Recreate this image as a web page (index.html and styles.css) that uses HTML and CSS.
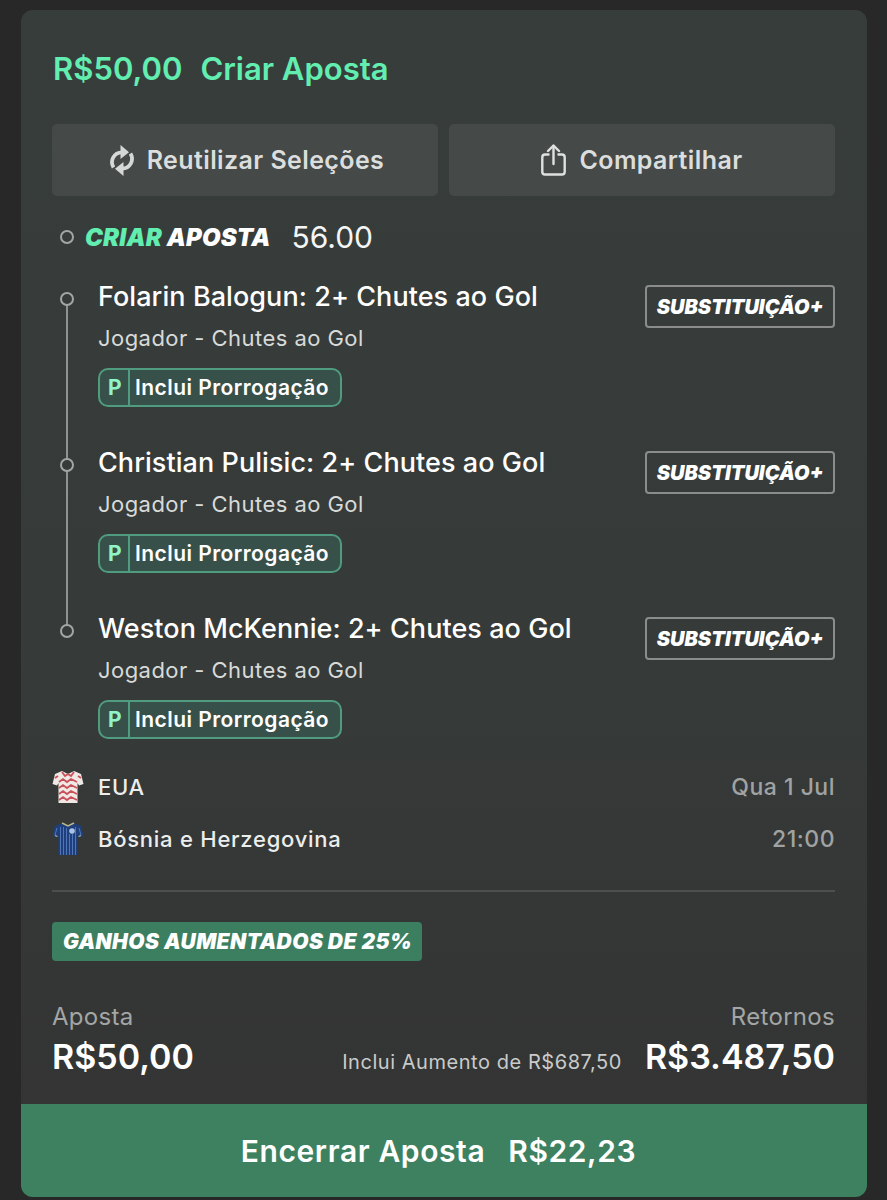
FILE: index.html
```html
<!DOCTYPE html>
<html lang="en">
<head>
    <meta charset="UTF-8">
    <meta name="viewport" content="width=device-width, initial-scale=1.0">
    <title>Criar Aposta</title>
    <link rel="stylesheet" href="styles.css">
</head>
<body>
    <div class="card">
        <div class="card-body">
            <h2 class="title"><span>R$50,00</span><span>Criar Aposta</span></h2>

            <div class="actions">
                <div class="action-btn reuse">
                    <svg width="24" height="31" viewBox="0 0 24 31" fill="none">
                        <path d="M3.5 22.5C-0.5 15.5 4 7.6 12 7.4" stroke="#d6d8d7" stroke-width="3.8"/>
                        <path d="M10.5 0L19 7.2L10.5 14Z" fill="#d6d8d7"/>
                        <path d="M20.5 8.5C24.5 15.5 20 23.4 12 23.6" stroke="#d6d8d7" stroke-width="3.8"/>
                        <path d="M13.5 31L5 23.8L13.5 17Z" fill="#d6d8d7"/>
                    </svg>
                    <span>Reutilizar Seleções</span>
                </div>
                <div class="action-btn">
                    <svg width="25" height="32" viewBox="0 0 25 32" fill="none" stroke="#dfe1e0" stroke-width="2.4" stroke-linecap="round" stroke-linejoin="round">
                        <path d="M7.5 10.5H4C2.4 10.5 1.3 11.6 1.3 13.2V27.8C1.3 29.4 2.4 30.5 4 30.5H21C22.6 30.5 23.7 29.4 23.7 27.8V13.2C23.7 11.6 22.6 10.5 21 10.5H17.5"/>
                        <path d="M12.5 20V2"/>
                        <path d="M7 7L12.5 1.5L18 7"/>
                    </svg>
                    <span>Compartilhar</span>
                </div>
            </div>

            <div class="bet-head">
                <span class="dot"></span>
                <span class="brand"><em>CRIAR</em> APOSTA</span>
                <span class="odds">56.00</span>
            </div>

            <div class="legs">
                <div class="leg">
                    <div class="leg-info">
                        <div class="leg-name">Folarin Balogun: 2+ Chutes ao Gol</div>
                        <div class="leg-market">Jogador - Chutes ao Gol</div>
                        <div class="extra-time"><b>P</b><span>Inclui Prorrogação</span></div>
                    </div>
                    <div class="sub-tag">SUBSTITUIÇÃO+</div>
                </div>
                <div class="leg">
                    <div class="leg-info">
                        <div class="leg-name">Christian Pulisic: 2+ Chutes ao Gol</div>
                        <div class="leg-market">Jogador - Chutes ao Gol</div>
                        <div class="extra-time"><b>P</b><span>Inclui Prorrogação</span></div>
                    </div>
                    <div class="sub-tag">SUBSTITUIÇÃO+</div>
                </div>
                <div class="leg">
                    <div class="leg-info">
                        <div class="leg-name">Weston McKennie: 2+ Chutes ao Gol</div>
                        <div class="leg-market">Jogador - Chutes ao Gol</div>
                        <div class="extra-time"><b>P</b><span>Inclui Prorrogação</span></div>
                    </div>
                    <div class="sub-tag">SUBSTITUIÇÃO+</div>
                </div>
            </div>

            <div class="match">
                <div class="team-row">
                    <svg class="shirt" width="32" height="34" viewBox="0 0 32 34">
                        <path d="M10 1L3 4L0.5 14L5 15.5L6.5 13V33H25.5V13L27 15.5L31.5 14L29 4L22 1L16 4Z" fill="#efe8e4"/>
                        <path d="M7 12L11 9L15 12L19 9L25 12M7 18L11 15L15 18L19 15L25 18M7 24L11 21L15 24L19 21L25 24M7 30L11 27L15 30L19 27L25 30M10 2L13 6L16 4L19 6L22 2M3 8L6 6M26 6L29 8" fill="none" stroke="#c8505a" stroke-width="1.8"/>
                    </svg>
                    <span class="team">EUA</span>
                    <span class="match-info">Qua 1 Jul</span>
                </div>
                <div class="team-row">
                    <svg class="shirt" width="32" height="34" viewBox="0 0 32 34">
                        <path d="M10 1L3 4L0.5 14L5 15.5L6.5 13V33H25.5V13L27 15.5L31.5 14L29 4L22 1L16 4Z" fill="#1f3f7c"/>
                        <path d="M8.5 5V33M11.5 5V33M14.5 6V33M17.5 12V33M20.5 12V33M23.5 5V33M5 6L3 13M27 6L29 13" fill="none" stroke="#4f77b8" stroke-width="1"/>
                        <path d="M10 1L16 4L22 1" fill="none" stroke="#b9b98a" stroke-width="1.4"/>
                        <path d="M3 13.5L5.5 14.5M29 13.5L26.5 14.5" fill="none" stroke="#b9b98a" stroke-width="1.2"/>
                        <circle cx="20" cy="9" r="2.8" fill="#a9c2e6"/>
                    </svg>
                    <span class="team">Bósnia e Herzegovina</span>
                    <span class="match-info">21:00</span>
                </div>
            </div>

            <div class="boost-tag">GANHOS AUMENTADOS DE 25%</div>

            <div class="totals">
                <div class="stake">
                    <div class="total-label">Aposta</div>
                    <div class="total-value">R$50,00</div>
                </div>
                <div class="returns">
                    <div class="total-label">Retornos</div>
                    <div class="returns-line">
                        <span class="boost-note">Inclui Aumento de R$687,50</span>
                        <span class="total-value">R$3.487,50</span>
                    </div>
                </div>
            </div>
        </div>

        <div class="cashout"><span>Encerrar Aposta</span><span>R$22,23</span></div>
    </div>
</body>
</html>
```

FILE: styles.css
```css
body {
    margin: 0;
    background-color: #282828;
    font-family: 'Inter', sans-serif;
    color: #fff;
    padding: 10px 20px 3px 21px;
}
.card {
    height: 1187px;
    display: flex;
    flex-direction: column;
    border-radius: 12px;
    overflow: hidden;
    background: linear-gradient(180deg, #373d3b 0%, #363b39 50%, #333333 100%);
}
.card-body {
    flex: 1;
    padding: 0 32px 0 31px;
}
.title {
    margin: 41px 0 0;
    display: flex;
    gap: 18px;
    font-size: 31px;
    line-height: 36px;
    font-weight: 600;
    color: #61eeb0;
    padding-left: 1px;
}
.actions {
    display: grid;
    grid-template-columns: 1fr 1fr;
    gap: 11px;
    margin-top: 37px;
}
.action-btn {
    height: 72px;
    display: flex;
    align-items: center;
    justify-content: center;
    gap: 13px;
    background-color: #454a49;
    border-radius: 5px;
    color: #dcdedd;
    font-size: 25px;
    font-weight: 600;
    letter-spacing: 0.4px;
}
.reuse {
    padding-left: 4px;
}
.bet-head {
    display: flex;
    align-items: center;
    height: 32px;
    margin-top: 25px;
    padding-left: 8px;
}
.dot {
    width: 10px;
    height: 10px;
    border: 2px solid #a3a6a5;
    border-radius: 50%;
    flex-shrink: 0;
}
.brand {
    margin-left: 11px;
    font-style: italic;
    font-weight: 900;
    font-size: 24px;
    letter-spacing: 0.15px;
    color: #fff;
}
.brand em {
    color: #61eeb0;
}
.odds {
    margin-left: 21px;
    font-size: 30px;
    color: #f4f5f5;
}
.legs {
    margin-top: 28px;
}
.leg {
    position: relative;
    display: flex;
    justify-content: space-between;
    align-items: flex-start;
    height: 166px;
    padding-left: 46px;
    box-sizing: border-box;
}
.leg::before {
    content: "";
    position: absolute;
    left: 8px;
    top: 11px;
    width: 10px;
    height: 10px;
    border: 2px solid #a3a6a5;
    border-radius: 50%;
    background: #363b39;
    z-index: 1;
}
.leg::after {
    content: "";
    position: absolute;
    left: 14px;
    top: 18px;
    width: 2px;
    height: 166px;
    background: #8f9291;
}
.leg:last-child::after {
    display: none;
}
.leg-name {
    font-size: 27px;
    line-height: 32px;
    font-weight: 550;
    letter-spacing: 0.06px;
    color: #fff;
}
.leg-market {
    margin-top: 10px;
    font-size: 22px;
    line-height: 30px;
    letter-spacing: 0.45px;
    color: #d8dad9;
}
.extra-time {
    display: inline-flex;
    align-items: stretch;
    height: 39px;
    box-sizing: border-box;
    margin-top: 15px;
    background-color: #38504a;
    border: 2px solid #4f9c80;
    border-radius: 10px;
    font-size: 21px;
    font-weight: 600;
    line-height: 35px;
    letter-spacing: 0.45px;
}
.extra-time b {
    width: 26px;
    padding-left: 2px;
    text-align: center;
    font-weight: 700;
    color: #8ff5c8;
    border-right: 2px solid #4f9c80;
}
.extra-time span {
    padding: 0 11px 0 5px;
}
.sub-tag {
    width: 190px;
    height: 43px;
    margin-top: 4px;
    box-sizing: border-box;
    border: 2px solid #8a8d8c;
    border-radius: 4px;
    text-align: center;
    font-style: italic;
    font-weight: 900;
    font-size: 20px;
    line-height: 40px;
}
.match {
    margin-top: -18px;
    padding-bottom: 25px;
    border-bottom: 2px solid #4b4f4e;
}
.team-row {
    display: flex;
    align-items: center;
    height: 52px;
}
.shirt {
    flex-shrink: 0;
}
.team {
    flex: 1;
    margin-left: 14px;
    font-size: 22px;
    font-weight: 500;
    letter-spacing: 0.75px;
    color: #eceeed;
}
.match-info {
    font-size: 23px;
    font-weight: 500;
    letter-spacing: 0.5px;
    color: #a0a3a2;
}
.boost-tag {
    display: inline-block;
    margin-top: 30px;
    height: 39px;
    padding: 0 10px 0 11px;
    background-color: #3b7f60;
    border-radius: 4px;
    font-style: italic;
    font-weight: 900;
    font-size: 21px;
    line-height: 39px;
    letter-spacing: 0.4px;
}
.totals {
    display: flex;
    justify-content: space-between;
    margin-top: 41px;
}
.returns {
    text-align: right;
}
.total-label {
    font-size: 24px;
    line-height: 30px;
    letter-spacing: 0.3px;
    color: #a3a6a5;
}
.total-value {
    margin-top: 3px;
    font-size: 34px;
    line-height: 44px;
    font-weight: 600;
}
.returns-line {
    display: flex;
    align-items: baseline;
    gap: 23px;
}
.boost-note {
    font-size: 20px;
    letter-spacing: 0.55px;
    color: #c9cbca;
}
.cashout {
    height: 93px;
    padding-right: 11px;
    display: flex;
    align-items: center;
    justify-content: center;
    gap: 23px;
    background-color: #3d8160;
    font-size: 30px;
    font-weight: 600;
    letter-spacing: 0.6px;
}
```
